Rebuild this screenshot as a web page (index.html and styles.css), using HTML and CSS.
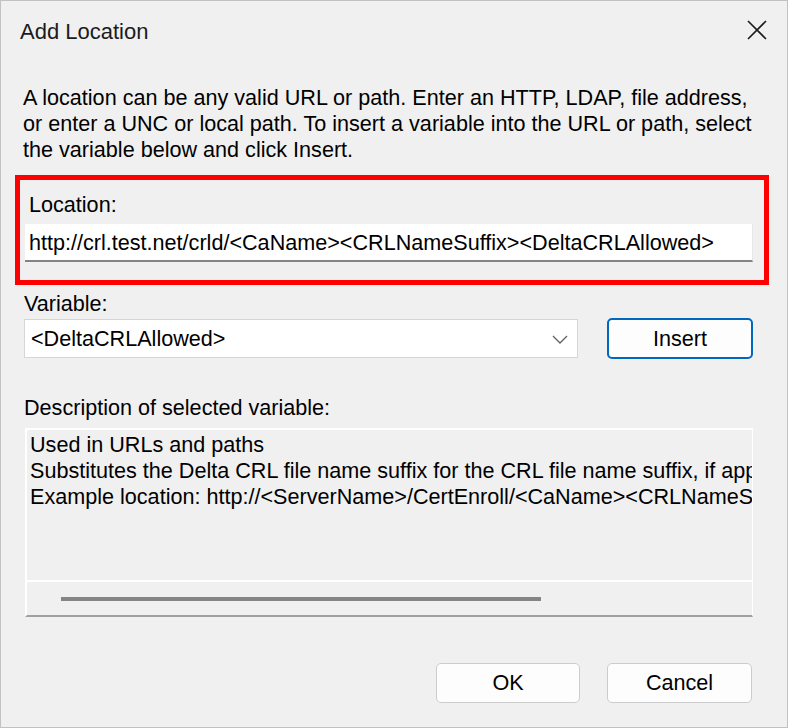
FILE: index.html
```html
<!DOCTYPE html>
<html>
<head>
<meta charset="utf-8">
<title>Add Location</title>
<link rel="stylesheet" href="styles.css">
</head>
<body>
<div class="window">
  <div class="titlebar">
    <span class="title">Add Location</span>
    <svg class="close" width="20" height="20" viewBox="0 0 20 20">
      <path d="M1 1 L19 19 M19 1 L1 19" stroke="#1a1a1a" stroke-width="1.6" fill="none"/>
    </svg>
  </div>
  <p class="intro">A location can be any valid URL or path. Enter an HTTP, LDAP, file address,<br>or enter a UNC or local path. To insert a variable into the URL or path, select<br>the variable below and click Insert.</p>
  <div class="highlight">
    <div class="label loc-label">Location:</div>
    <div class="textbox">http://crl.test.net/crld/&lt;CaName&gt;&lt;CRLNameSuffix&gt;&lt;DeltaCRLAllowed&gt;</div>
  </div>
  <div class="label var-label">Variable:</div>
  <div class="var-row">
    <div class="combo">
      <span>&lt;DeltaCRLAllowed&gt;</span>
      <svg class="chev" width="16" height="9" viewBox="0 0 16 9">
        <path d="M1 1 L8 8 L15 1" stroke="#606060" stroke-width="1.3" fill="none"/>
      </svg>
    </div>
    <div class="btn btn-default">Insert</div>
  </div>
  <div class="label desc-label">Description of selected variable:</div>
  <div class="descbox">
    <div class="desc-text">Used in URLs and paths<br>Substitutes the Delta CRL file name suffix for the CRL file name suffix, if appropriate<br>Example location: http://&lt;ServerName&gt;/CertEnroll/&lt;CaName&gt;&lt;CRLNameSuffix&gt;&lt;DeltaCRLAllowed&gt;.crl</div>
    <div class="hscroll"><div class="thumb"></div></div>
  </div>
  <div class="footer">
    <div class="btn">OK</div>
    <div class="btn">Cancel</div>
  </div>
</div>
</body>
</html>
```
FILE: styles.css
```css
html, body {
  margin: 0;
  padding: 0;
  background: #f0f0f0;
}
.window {
  box-sizing: border-box;
  width: 788px;
  height: 728px;
  border: 1px solid #c2c2c2;
  background: #f0f0f0;
  font-family: "Liberation Sans", Arial, sans-serif;
  font-size: 21.6px;
  line-height: 26px;
  color: #000;
  overflow: hidden;
}
.titlebar {
  height: 60px;
  display: flex;
  align-items: flex-start;
  justify-content: space-between;
  padding-left: 19px;
  padding-right: 20px;
}
.title {
  font-size: 22px;
  line-height: 26px;
  padding-top: 18px;
  color: #1b1b1b;
}
.close {
  margin-top: 19px;
}
.intro {
  margin: 24px 0 0 22px;
  white-space: nowrap;
}
.highlight {
  box-sizing: border-box;
  width: 754px;
  height: 110px;
  margin: 12px 0 0 14px;
  border: 5px solid #ff0000;
  padding: 12px 0 0 5px;
}
.loc-label {
  padding-left: 4px;
}
.textbox {
  box-sizing: border-box;
  width: 728px;
  height: 38px;
  margin-top: 6px;
  background: #ffffff;
  border-bottom: 2px solid #848484;
  border-right: 1px solid #e6e6e6;
  padding: 6px 0 0 4px;
  white-space: nowrap;
  overflow: hidden;
}
.var-label {
  margin: 6px 0 0 23px;
}
.var-row {
  display: flex;
  align-items: center;
  margin: 1px 0 0 23px;
  height: 41px;
}
.combo {
  box-sizing: border-box;
  width: 554px;
  height: 39px;
  background: #ffffff;
  border: 1px solid #d6d6d6;
  display: flex;
  align-items: center;
  justify-content: space-between;
  padding: 0 9px 0 6px;
}
.chev {
  margin-top: 2px;
}
.btn {
  box-sizing: border-box;
  width: 145px;
  height: 40px;
  background: #fdfdfd;
  border: 1px solid #cccccc;
  border-radius: 5px;
  display: flex;
  align-items: center;
  justify-content: center;
}
.btn-default {
  width: 146px;
  height: 41px;
  margin-left: 29px;
  border: 2px solid #0067c0;
}
.desc-label {
  margin: 36px 0 0 23px;
}
.descbox {
  box-sizing: border-box;
  width: 728px;
  height: 189px;
  margin: 7px 0 0 24px;
  border-top: 2px solid #ffffff;
  border-left: 2px solid #ffffff;
  border-right: 1px solid #ffffff;
  border-bottom: 2px solid #a0a0a0;
  display: flex;
  flex-direction: column;
}
.desc-text {
  height: 150px;
  padding: 2px 4px 0 3px;
  box-sizing: border-box;
  white-space: nowrap;
  overflow: hidden;
}
.hscroll {
  flex: 1;
  border-top: 2px solid #ffffff;
  display: flex;
  align-items: center;
}
.thumb {
  width: 480px;
  height: 4px;
  margin-left: 34px;
  background: #858585;
}
.footer {
  display: flex;
  justify-content: flex-end;
  gap: 27px;
  margin-top: 46px;
  padding-right: 35px;
}
.footer .btn:first-child {
  width: 144px;
}
```
